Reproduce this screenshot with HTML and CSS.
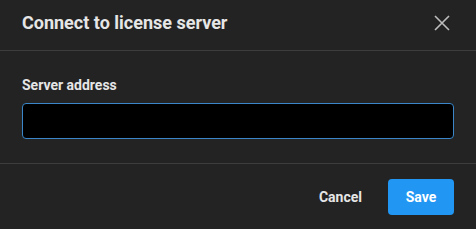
FILE: index.html
```html
<!DOCTYPE html>
<html lang="en">
<head>
    <meta charset="UTF-8">
    <title>Connect to license server</title>
    <link rel="stylesheet" href="styles.css">
</head>
<body>
    <div class="dialog">
        <div class="dialog-header">
            <h2 class="dialog-title">Connect to license server</h2>
            <button class="close-btn" aria-label="Close">
                <svg width="16" height="16" viewBox="0 0 16 16">
                    <path d="M1 1 L15 15 M15 1 L1 15" stroke="#bdbdbd" stroke-width="1.6" fill="none"/>
                </svg>
            </button>
        </div>

        <div class="dialog-body">
            <label class="field-label" for="server">Server address</label>
            <input class="field-input" id="server" type="text">
        </div>

        <div class="dialog-footer">
            <button class="btn btn-text">Cancel</button>
            <button class="btn btn-primary">Save</button>
        </div>
    </div>
</body>
</html>
```

FILE: styles.css
```css
:root {
    --bg-color: #232323;
    --divider-color: #3d3d3d;
    --text-color: #e6e6e6;
    --primary-color: #2196f3;
    --focus-color: #3a86c8;
}

body {
    margin: 0;
    background: var(--bg-color);
    color: var(--text-color);
    font-family: Roboto, 'Liberation Sans', sans-serif;
}

.dialog {
    width: 476px;
    height: 229px;
    display: flex;
    flex-direction: column;
}

.dialog-header {
    display: flex;
    align-items: center;
    justify-content: space-between;
    padding: 11px 26px 15px 22px;
    border-bottom: 1px solid var(--divider-color);
}

.dialog-title {
    margin: 0;
    font-size: 18px;
    line-height: 24px;
    font-weight: 700;
}

.close-btn {
    background: none;
    border: none;
    padding: 0;
    width: 16px;
    height: 16px;
    display: flex;
    cursor: pointer;
}

.dialog-body {
    padding: 24px 22px 24px;
    display: flex;
    flex-direction: column;
    gap: 8px;
    border-bottom: 1px solid var(--divider-color);
}

.field-label {
    font-size: 14px;
    line-height: 20px;
    font-weight: 700;
}

.field-input {
    box-sizing: border-box;
    height: 36px;
    width: 100%;
    background: #000;
    border: 1px solid var(--focus-color);
    border-radius: 4px;
    color: var(--text-color);
    outline: none;
}

.dialog-footer {
    display: flex;
    justify-content: flex-end;
    gap: 10px;
    padding: 15px 22px 0;
}

.btn {
    height: 36px;
    border: none;
    border-radius: 4px;
    font-family: inherit;
    font-size: 14px;
    font-weight: 700;
    cursor: pointer;
}

.btn-text {
    background: none;
    color: var(--text-color);
    padding: 0 16px;
}

.btn-primary {
    width: 66px;
    background: var(--primary-color);
    color: #fff;
}
```
